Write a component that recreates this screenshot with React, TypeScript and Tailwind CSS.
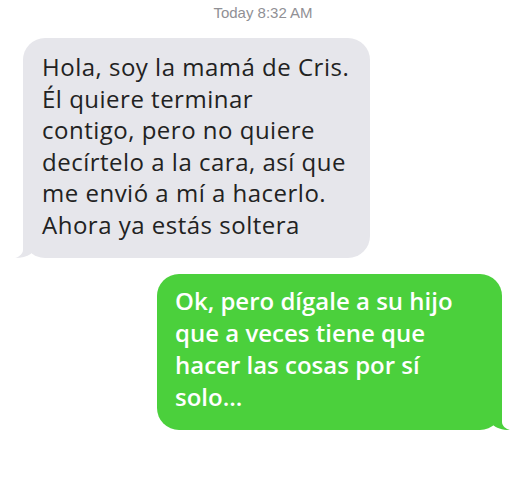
export default function App() {
  return (
    <div className="w-[516px] h-[500px] bg-white relative overflow-hidden">
      <div className="pt-[4px] text-center text-[15px] leading-[18px] text-[#909095] pl-[10px]" style={{ fontFamily: '"Liberation Sans", Arial, sans-serif' }}>
        Today 8:32 AM
      </div>
      <div className="mt-[16px] ml-[23px] w-[347px] relative">
        <div className="bg-[#e6e6eb] rounded-[22px] pl-[19px] pr-[6px] pt-[13px] pb-[18px] text-[24px] leading-[31.5px] tracking-[0.5px] text-[#222]" style={{ fontFamily: '"Open Sans", sans-serif' }}>
          Hola, soy la mamá de Cris.<br />
          Él quiere terminar<br />
          contigo, pero no quiere<br />
          decírtelo a la cara, así que<br />
          me envió a mí a hacerlo.<br />
          Ahora ya estás soltera
        </div>
        <svg className="absolute left-[-8px] bottom-0" width="30" height="22" viewBox="0 0 30 22">
          <path d="M8 0 L8 14 C8 18 4 21 0 22 C8 22 14 20 18 16 L30 16 L30 0 Z" fill="#e6e6eb" />
        </svg>
      </div>
      <div className="mt-[16px] ml-[157px] w-[345px] relative">
        <div className="bg-[#4bd03c] rounded-[22px] pl-[18px] pr-[4px] pt-[11px] pb-[17px] text-[24px] leading-[32px] text-white font-semibold" style={{ fontFamily: '"Open Sans", sans-serif' }}>
          Ok, pero dígale a su hijo<br />
          que a veces tiene que<br />
          hacer las cosas por sí<br />
          solo...
        </div>
        <svg className="absolute right-[-8px] bottom-0" width="30" height="22" viewBox="0 0 30 22">
          <path d="M22 0 L22 14 C22 18 26 21 30 22 C22 22 16 20 12 16 L0 16 L0 0 Z" fill="#4bd03c" />
        </svg>
      </div>
    </div>
  );
}
